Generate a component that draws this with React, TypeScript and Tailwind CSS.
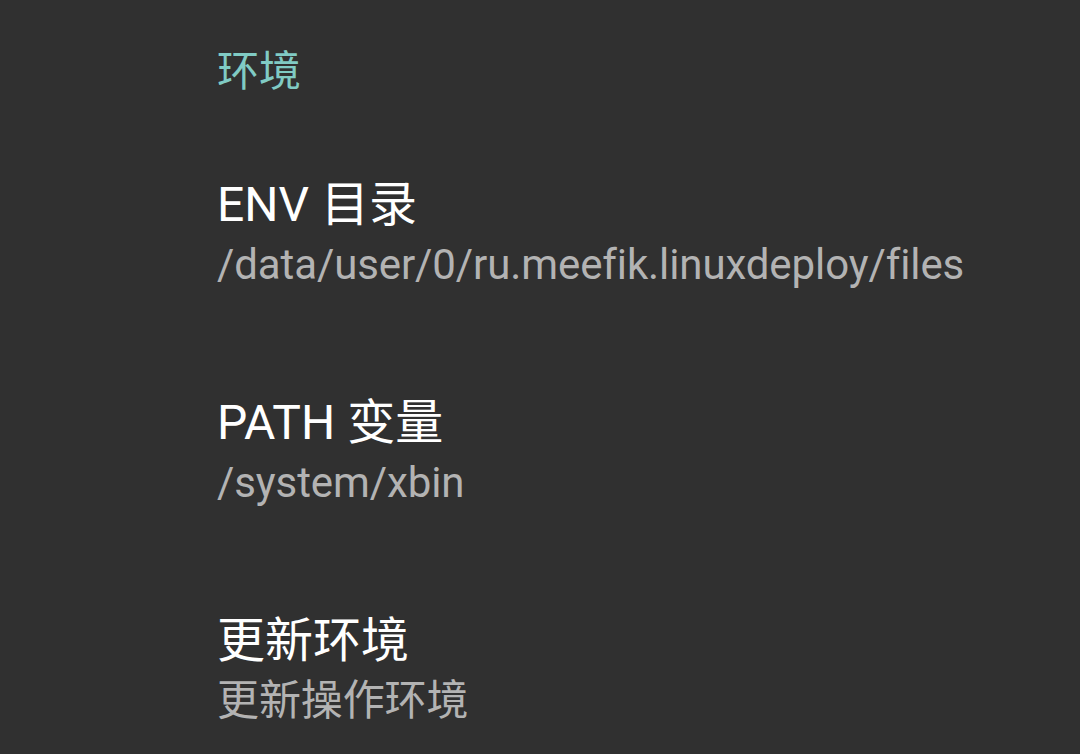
import React from "react";

type Pref = { title: string; summary: string };

const prefs: Pref[] = [
  { title: "ENV 目录", summary: "/data/user/0/ru.meefik.linuxdeploy/files" },
  { title: "PATH 变量", summary: "/system/xbin" },
  { title: "更新环境", summary: "更新操作环境" },
];

const font = "font-['Roboto','Noto_Sans_CJK_SC',sans-serif]";

const App: React.FC = () => {
  return (
    <div className={`h-[754px] w-[1080px] overflow-hidden bg-[#303030] ${font}`}>
      {/* category header */}
      <div className="flex h-[144px] items-center pl-[217px]">
        <span className="text-[42px] leading-[56px] text-[#80cbc4]">环境</span>
      </div>

      {prefs.map((p) => (
        <div key={p.title} className="flex h-[218px] flex-col pl-[217px] pt-[33px]">
          <div className="text-[48px] leading-[56px] text-white">{p.title}</div>
          <div className="text-[42px] leading-[64px] tracking-[-0.1px] text-[#b3b3b3]">{p.summary}</div>
        </div>
      ))}
    </div>
  );
};

export default App;
